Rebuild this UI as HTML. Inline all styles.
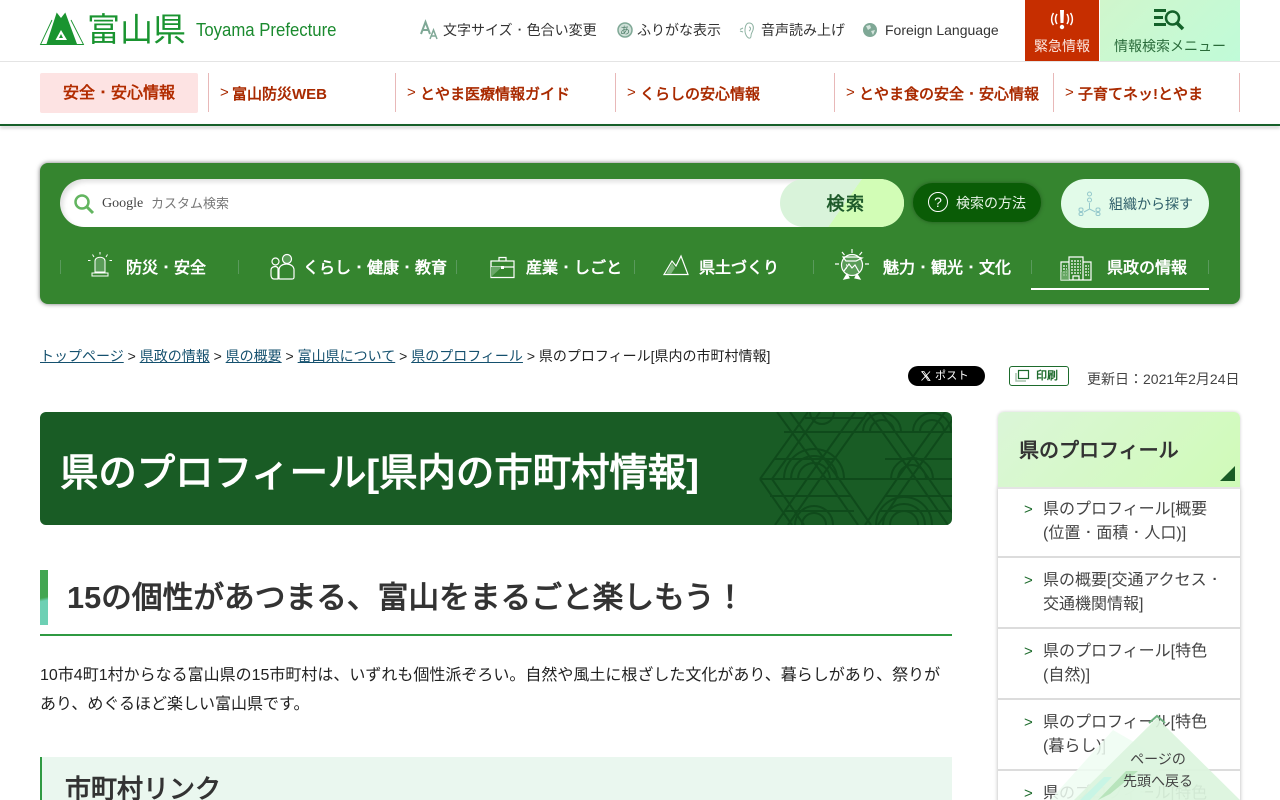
<!DOCTYPE html>
<html lang="ja"><head><meta charset="utf-8"><title>県のプロフィール[県内の市町村情報]</title>
<style>
*{box-sizing:border-box}
html,body{margin:0;padding:0;width:1280px;height:800px;overflow:hidden}
body{position:relative;background:#fff;font-family:"Liberation Sans","WenQuanYi Zen Hei",sans-serif;color:#222}
#w{position:absolute;left:0;top:0;width:1280px;height:800px;overflow:hidden}
.a{position:absolute;white-space:nowrap}
svg{position:absolute;overflow:visible}
i{font-family:"IPAGothic",sans-serif;font-style:normal;line-height:0}
.t{font-size:14px;line-height:20px;color:#333}
.n{font-size:15px;font-weight:700;color:#a92a00;line-height:20px}
.sep{position:absolute;top:73px;width:1px;height:39px;background:#e8b8b8}
.m{font-size:16px;font-weight:700;color:#fff;line-height:24px}
.g{position:absolute;top:260px;width:1px;height:14px;background:#5a9a5c}
.bc{font-size:14px;line-height:20px;color:#222}
.bc u{color:#14506e}
.s{position:absolute;left:998px;width:242px;border-bottom:2px solid #dcdcdc;background:#fff}
.st{position:absolute;left:1043px;font-size:16px;line-height:24px;color:#444;white-space:nowrap}
.ar{position:absolute;left:1024px;font-size:15px;line-height:20px;color:#1d6b2c}
</style></head><body><div id="w">

<div class="a" style="left:0;top:61px;width:1280px;height:1px;background:#e4e4e4"></div>
<svg style="left:40px;top:12px" width="44" height="33" viewBox="0 0 44 33"><path d="M12 8 .5 32.500H43.500L31 8" fill="none" stroke="#1a9430" stroke-width=".9"/><path d="M6.500 32 16.700 .5 21 6 25.300 .5 37 32Z" fill="#1a9430"/><path d="M21 18 15.500 28H27Z" fill="#fff"/><path d="M21 22 19 26H23Z" fill="#1a9430"/></svg>
<div class="a" style="left:87px;top:9px;font-size:33px;line-height:42px;color:#1a9430">富山県</div>
<div class="a" style="left:196px;top:19px;font-size:18px;line-height:22px;color:#1a8a2e;transform:scaleX(.93);transform-origin:0 0">Toyama Prefecture</div>

<svg style="left:421px;top:21px" width="18" height="19" viewBox="0 0 18 19"><path d="M0 13 4.500 1 9 13M2 9h5" fill="none" stroke="#7fa896" stroke-width="2"/><path d="M9 18 12.500 9 16 18M10.500 15h4" fill="none" stroke="#7fa896" stroke-width="1.500"/></svg>
<div class="a t" style="left:443px;top:20px">文字サイズ<i>・</i>色合い変更</div>
<svg style="left:617px;top:22px" width="16" height="16" viewBox="0 0 16 16"><circle cx="8" cy="8" r="7" fill="#cfe0d8" stroke="#7fa896" stroke-width="1.500"/><text x="8" y="12" font-size="10" text-anchor="middle" fill="#52806c">あ</text></svg>
<div class="a t" style="left:637px;top:20px">ふりがな表示</div>
<svg style="left:740px;top:22px" width="14" height="17" viewBox="0 0 14 17" fill="none" stroke="#8fb3a3" stroke-width="1"><path d="M6 13C4 9 5 1 9 1s5 4 4 7-2 3-2 6-3 3-5-1Z"/><path d="M9 5c2 0 2 3 0 4M3 6 0 7.500M3 10 0 9"/></svg>
<div class="a t" style="left:761px;top:20px">音声読み上げ</div>
<svg style="left:863px;top:23px" width="14" height="14" viewBox="0 0 14 14"><circle cx="7" cy="7" r="7" fill="#7fa896"/><path d="M3 3 7 2 8 5 5 7ZM8 8l4-1-2 5Z" fill="#d5e5dd"/></svg>
<div class="a t" style="left:885px;top:20px">Foreign Language</div>

<div class="a" style="left:1025px;top:0;width:74px;height:61px;background:#c62e00"></div>
<svg style="left:1048px;top:10px" width="28" height="21" viewBox="0 0 28 21" fill="none" stroke="#fff"><path d="M12 0h4l-.5 13h-3Z" fill="#fff" stroke="none"/><circle cx="14" cy="17" r="2.200" fill="#fff" stroke="none"/><path d="M9 4c-2 3-2 7 0 10M19 4c2 3 2 7 0 10M5.500 3c-2.500 4-2.500 9 0 12M22.500 3c2.500 4 2.500 9 0 12" stroke-width="1.500"/></svg>
<div class="a" style="left:1025px;top:36px;width:74px;text-align:center;font-size:14px;line-height:20px;color:#fbe6df">緊急情報</div>
<div class="a" style="left:1100px;top:0;width:140px;height:61px;background:linear-gradient(135deg,#d0f6cc,#c0fbd8)"></div>
<svg style="left:1154px;top:9px" width="32" height="22" viewBox="0 0 32 22"><path d="M0 1.500h12M0 8.500h9M0 15.500h12" stroke="#14622a" stroke-width="3"/><circle cx="18.500" cy="9" r="6.500" fill="none" stroke="#14622a" stroke-width="2.500"/><path d="m23 14 6 6" stroke="#14622a" stroke-width="3.500"/></svg>
<div class="a" style="left:1100px;top:36px;width:140px;text-align:center;font-size:14px;line-height:20px;color:#2a6b3a">情報検索メニュー</div>

<div class="a" style="left:40px;top:73px;width:158px;height:40px;background:#fde3e3;border-radius:2px;text-align:center;font-size:16px;font-weight:700;line-height:42px;color:#b22c00">安全<i>・</i>安心情報</div>
<div class="sep" style="left:208px"></div><div class="sep" style="left:395px"></div><div class="sep" style="left:615px"></div><div class="sep" style="left:834px"></div><div class="sep" style="left:1053px"></div><div class="sep" style="left:1239px"></div>
<div class="a n" style="left:220px;top:83px;font-weight:400;font-size:15px">&gt;</div><div class="a n" style="left:232px;top:85px">富山防災WEB</div>
<div class="a n" style="left:407px;top:83px;font-weight:400;font-size:15px">&gt;</div><div class="a n" style="left:420px;top:85px">とやま医療情報ガイド</div>
<div class="a n" style="left:627px;top:83px;font-weight:400;font-size:15px">&gt;</div><div class="a n" style="left:640px;top:85px">くらしの安心情報</div>
<div class="a n" style="left:846px;top:83px;font-weight:400;font-size:15px">&gt;</div><div class="a n" style="left:859px;top:85px">とやま食の安全<i>・</i>安心情報</div>
<div class="a n" style="left:1065px;top:83px;font-weight:400;font-size:15px">&gt;</div><div class="a n" style="left:1078px;top:85px">子育てネッ!とやま</div>
<div class="a" style="left:0;top:124px;width:1280px;height:2px;background:#17602a;box-shadow:0 2px 3px rgba(0,0,0,.25)"></div>

<div class="a" style="left:40px;top:163px;width:1200px;height:141px;background:#35852f;border-radius:8px;box-shadow:0 0 5px rgba(0,0,0,.55)"></div>
<div class="a" style="left:60px;top:179px;width:844px;height:48px;background:#fff;border-radius:24px;box-shadow:inset 3px 3px 5px rgba(0,0,0,.12)"></div>
<div class="a" style="left:780px;top:179px;width:124px;height:48px;border-radius:24px;background:linear-gradient(125deg,#d9f3da 0 52%,#d2fdb6 52%);text-align:center;font-size:18px;font-weight:700;line-height:50px;letter-spacing:1.500px;color:#1f5b2b;padding-left:8px">検索</div>
<svg style="left:73px;top:193px" width="22" height="22" viewBox="0 0 22 22"><circle cx="9" cy="9" r="6.500" fill="none" stroke="#63b560" stroke-width="2.500"/><path d="m14 14 6 6" stroke="#63b560" stroke-width="3"/></svg>
<div class="a" style="left:102px;top:194px;font-family:'Liberation Serif',serif;font-size:14px;line-height:20px;color:#444">Google</div>
<div class="a" style="left:151px;top:194px;font-size:13px;line-height:20px;color:#777">カスタム検索</div>
<div class="a" style="left:913px;top:183px;width:128px;height:39px;border-radius:20px;background:#0a5c06;box-shadow:0 0 4px rgba(0,0,0,.35)"></div>
<svg style="left:928px;top:192px" width="20" height="20" viewBox="0 0 20 20"><circle cx="10" cy="10" r="9.500" fill="none" stroke="#fff"/><text x="10" y="15" font-size="14" text-anchor="middle" fill="#fff">?</text></svg>
<div class="a" style="left:956px;top:193px;font-size:14px;line-height:20px;color:#e8f5e8">検索の方法</div>
<div class="a" style="left:1061px;top:179px;width:148px;height:49px;border-radius:25px;background:#e2fbe9"></div>
<svg style="left:1078px;top:191px" width="24" height="25" viewBox="0 0 24 25" fill="none" stroke="#94c8cc"><rect x="9.500" y="1" width="4" height="4" rx="2"/><rect x="9.500" y="7" width="4" height="4" rx="2"/><rect x="1" y="17" width="4" height="3.500" rx="1.500"/><rect x="1" y="21.500" width="4" height="3" rx="1.500"/><rect x="18" y="17" width="4" height="3.500" rx="1.500"/><rect x="18" y="21.500" width="4" height="3" rx="1.500"/><path d="M11.500 12v6M11.500 18 6 21M11.500 18l6 3"/></svg>
<div class="a" style="left:1109px;top:194px;font-size:14px;line-height:20px;color:#2f5f6a">組織から探す</div>

<div class="g" style="left:60px"></div><div class="g" style="left:238px"></div><div class="g" style="left:456px"></div><div class="g" style="left:634px"></div><div class="g" style="left:813px"></div><div class="g" style="left:1031px"></div><div class="g" style="left:1208px"></div>
<svg style="left:86px;top:252px" width="28" height="28" viewBox="0 0 28 28" fill="none" stroke="#fff"><path d="M9 20V9c0-5 10-5 10 0v11Z" fill="#5a9c58"/><path d="M6 21h16v3H6Z"/><path d="M14 0v2.500M6.500 2.500 8 5M21.500 2.500 20 5M2 8.500h2.500M26 8.500h-2.500" stroke-width="1"/></svg>
<div class="a m" style="left:126px;top:257px">防災<i>・</i>安全</div>
<svg style="left:270px;top:254px" width="26" height="26" viewBox="0 0 26 26" fill="none" stroke="#fff" stroke-width="1.200"><circle cx="5.500" cy="7.500" r="3.500"/><circle cx="17" cy="5" r="4.500" fill="#5a9c58"/><path d="M1 21v-5c0-3 5-5 7-2v11H4c-2 0-3-2-3-4ZM9 24v-8c0-8 15-8 15 0v7c0 2-1 2-2 2H10c-1 0-1-1-1-1Z"/></svg>
<div class="a m" style="left:303px;top:257px">くらし<i>・</i>健康<i>・</i>教育</div>
<svg style="left:490px;top:256px" width="25" height="23" viewBox="0 0 25 23" fill="none" stroke="#fff" stroke-width="1.200"><path d="M9 5V1.500h7V5M1 5h23v16.500H1Z"/><path d="M1 5v6h23" /><path d="M1 21 12 11H1Z" fill="#6aa868" stroke="none"/><path d="M11 10h3v3h-3Z" fill="#fff" stroke="none"/></svg>
<div class="a m" style="left:526px;top:257px">産業<i>・</i>しごと</div>
<svg style="left:663px;top:255px" width="26" height="21" viewBox="0 0 26 21" fill="none" stroke="#fff" stroke-width="1.200"><path d="M1 19.500 9 6l4 5 5-10 7 18.500Z"/><path d="M3 19 9 8l3 5-4 6Z" fill="#7db57a" stroke="none"/></svg>
<div class="a m" style="left:699px;top:257px">県土づくり</div>
<svg style="left:834px;top:248px" width="36" height="35" viewBox="0 0 36 35" fill="none" stroke="#fff" stroke-width="1.200"><circle cx="18" cy="17" r="10.500" fill="#5a9c58"/><path d="M18 1v4M8 4l2.500 3M28 4l-2.500 3M1 16h4M31 16h4"/><path d="M10 31l3-5 2 4ZM26 31l-3-5-2 4Z" fill="#fff"/><path d="M9 9h14l5 1-6 3H12ZM10 23l5-7 3 4 3-3 4 7" /><path d="M12 17h2M12 20h1" stroke-dasharray="1 1"/></svg>
<div class="a m" style="left:883px;top:257px">魅力<i>・</i>観光<i>・</i>文化</div>
<svg style="left:1060px;top:256px" width="32" height="25" viewBox="0 0 32 25" fill="none" stroke="#fff" stroke-width="1.200"><path d="M9 1h14v23H9ZM1 6h8v18H1ZM23 6h8v18h-8ZM13 24v-4h6v4"/><path d="M11 5h10M11 8h10M11 11h10M11 14h10M11 17h10M3 10h4M3 13h4M3 16h4M3 19h4M25 10h4M25 13h4M25 16h4M25 19h4" stroke-dasharray="2 1"/><path d="M1 24V16l8-3v11Z" fill="#7db57a" stroke="none" opacity=".7"/></svg>
<div class="a m" style="left:1107px;top:257px">県政の情報</div>
<div class="a" style="left:1031px;top:288px;width:178px;height:2px;background:#fff"></div>

<div class="a bc" style="left:40px;top:346px"><u>トップページ</u> &gt; <u>県政の情報</u> &gt; <u>県の概要</u> &gt; <u>富山県について</u> &gt; <u>県のプロフィール</u> &gt; 県のプロフィール[県内の市町村情報]</div>
<div class="a" style="left:908px;top:366px;width:77px;height:20px;background:#000;border-radius:10px;color:#fff;font-size:11px;line-height:20px;padding-left:27px;letter-spacing:.3px">ポスト</div>
<svg style="left:921px;top:371px" width="10" height="10" viewBox="0 0 10 10" fill="none" stroke="#fff"><path d="M.5.500 9 9.500M9 .5 .500 9.500" stroke-width=".9"/><path d="M1 .5h2L9 9.500H7Z" stroke-width=".7"/></svg>
<div class="a" style="left:1009px;top:366px;width:60px;height:20px;border:1px solid #1d6b2c;border-radius:3px;background:#fff;color:#1d6b2c;font-size:11px;font-weight:700;line-height:18px;padding-left:26px">印刷</div>
<svg style="left:1015px;top:370px" width="15" height="13" viewBox="0 0 15 13"><rect x="3.500" y=".5" width="10" height="8" fill="none" stroke="#1d6b2c" stroke-width="1.200"/><path d="M1 3v8h10" fill="none" stroke="#a8c4ae" stroke-width="1.500"/></svg>
<div class="a" style="left:1087px;top:369px;font-size:14px;line-height:20px;color:#444">更新日：2021年2月24日</div>

<div class="a" style="left:40px;top:412px;width:912px;height:113px;border-radius:6px;background:#195c25;overflow:hidden">
<svg style="left:720px;top:0" width="192" height="113" viewBox="0 0 192 113" fill="none" stroke="#0f4a1b" stroke-width="2">
<path d="M0 67 48 0M12 67 60 0M0 67 32 113M12 67 44 113M17 0l49 67 32 46M30 0l49 67 32 46M108 0 60 67 28 113M95 0 47 67 15 113M198 0l-48 67-32 46M185 0l-48 67-32 46M108 0l48 67 32 46M121 0l48 67 32 46"/>
<path d="M0 67h192M24 20h170M14 47h60M125 47h70M10 84h80M125 84h70M24 99h70M120 99h75M45 6h60"/>
<path d="M38 67a16 16 0 0 1 32 0M31 67a23 23 0 0 1 46 0M24 67a30 30 0 0 1 60 0M42 113a12 12 0 0 1 24 0M35 113a19 19 0 0 1 38 0M138 67a14 14 0 0 1 28 0M131 67a21 21 0 0 1 42 0M160 20a12 12 0 0 1 24 0M153 20a19 19 0 0 1 38 0M110 20a12 12 0 0 1 24 0M103 20a19 19 0 0 1 38 0M130 113a14 14 0 0 1 28 0M123 113a21 21 0 0 1 42 0M116 113a28 28 0 0 1 56 0M50 0a12 12 0 0 0 24 0"/>
</svg>
<div class="a" style="left:20px;top:36px;font-size:38.400px;font-weight:700;line-height:52px;color:#fff">県のプロフィール[県内の市町村情報]</div>
</div>

<div class="a" style="left:40px;top:570px;width:8px;height:55px;background:linear-gradient(168deg,#43a652 0 50%,#6dd0b4 56%)"></div>
<div class="a" style="left:67px;top:577px;font-size:30.720px;font-weight:700;line-height:42px;color:#333">15の個性があつまる、富山をまるごと楽しもう！</div>
<div class="a" style="left:40px;top:634px;width:912px;height:2px;background:#2f9a42"></div>
<div class="a" style="left:40px;top:661px;width:912px;font-size:16px;line-height:29px;color:#222;white-space:normal">10市4町1村からなる富山県の15市町村は、いずれも個性派ぞろい。自然や風土に根ざした文化があり、暮らしがあり、祭りがあり、めぐるほど楽しい富山県です。</div>
<div class="a" style="left:40px;top:757px;width:912px;height:43px;background:#eaf7ef;border-left:2px solid #2f9a42"></div>
<div class="a" style="left:65px;top:771px;font-size:26px;font-weight:700;line-height:36px;color:#333">市町村リンク</div>

<div class="a" style="left:998px;top:487px;width:242px;height:320px;box-shadow:0 0 4px rgba(0,0,0,.3)"></div>
<div class="a" style="left:998px;top:412px;width:242px;height:75px;border-radius:6px 6px 0 0;background:linear-gradient(135deg,#dbf6d8,#d0fbb8);box-shadow:0 0 3px rgba(0,0,0,.2)"></div>
<div class="a" style="left:1019px;top:437px;font-size:20px;font-weight:700;line-height:28px;color:#333">県のプロフィール</div>
<svg style="left:1220px;top:466px" width="15" height="15" viewBox="0 0 15 15"><path d="M15 0v15H0Z" fill="#195c25"/></svg>
<div class="s" style="top:487px;height:71px;border-top:2px solid #e4e4e4"></div>
<div class="s" style="top:558px;height:71px"></div>
<div class="s" style="top:629px;height:71px"></div>
<div class="s" style="top:700px;height:71px"></div>
<div class="s" style="top:771px;height:29px;border-bottom:0"></div>
<div class="ar" style="top:500px">&gt;</div><div class="st" style="top:498px">県のプロフィール[概要<br>(位置<i>・</i>面積<i>・</i>人口)]</div>
<div class="ar" style="top:571px">&gt;</div><div class="st" style="top:569px">県の概要[交通アクセス<i>・</i><br>交通機関情報]</div>
<div class="ar" style="top:642px">&gt;</div><div class="st" style="top:640px">県のプロフィール[特色<br>(自然)]</div>
<div class="ar" style="top:713px">&gt;</div><div class="st" style="top:711px">県のプロフィール[特色<br>(暮らし)]</div>
<div class="ar" style="top:784px">&gt;</div><div class="st" style="top:782px">県のプロフィール[特色</div>

<svg style="left:1040px;top:710px" width="240" height="90" viewBox="0 0 240 90"><path d="M10 90 73 20 125 50 100 90Z" fill="#effdf2" fill-opacity=".85"/><path d="M34 90 117 8 200 90Z" fill="#dcf4de" fill-opacity=".93"/><path d="M40 90 64 67H72L50 90Z" fill="#c8f5e5"/><path d="M58 90 86 61H98L70 84Z" fill="#b8e4bc"/><path d="m109 13 8-7 8 7" fill="none" stroke="#6eb080" stroke-width="2"/></svg>
<div class="a" style="left:1118px;top:748px;width:80px;text-align:center;font-size:14px;line-height:22px;color:#444;white-space:normal">ページの<br>先頭へ戻る</div>
</div></body></html>
